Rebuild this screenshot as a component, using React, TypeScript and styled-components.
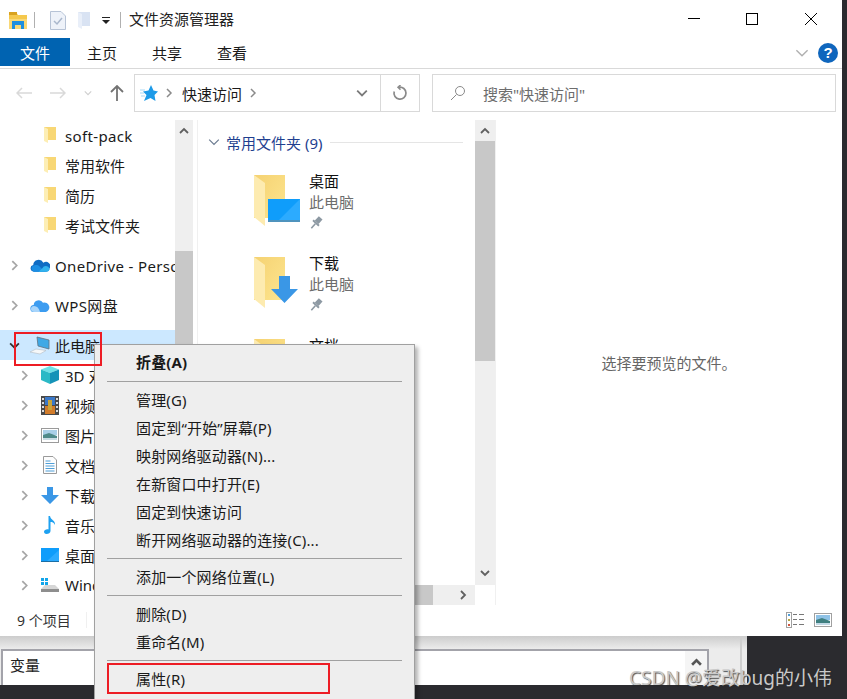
import styled, { createGlobalStyle } from 'styled-components';

const GlobalStyle = createGlobalStyle`
	html, body {
		margin: 0;
		padding: 0;
		background: #2b2b2f;
	}
	* {
		box-sizing: border-box;
	}
`;

const FONT = `"Noto Sans", "Noto Sans CJK SC", sans-serif`;

type Dir = 'up' | 'down' | 'left' | 'right';

const chevronPoints: Record<Dir, string> = {
	up: '1,7 5,3 9,7',
	down: '1,3 5,7 9,3',
	left: '7,1 3,5 7,9',
	right: '3,1 7,5 3,9',
};

function Chevron({ dir, color = '#a6a6a6', size = 10, width = 2 }: { dir: Dir; color?: string; size?: number; width?: number }) {
	return (
		<svg width={size} height={size} viewBox="0 0 10 10" fill="none">
			<polyline points={chevronPoints[dir]} stroke={color} strokeWidth={width} />
		</svg>
	);
}

function SmallFolder() {
	return (
		<svg width="14" height="18" viewBox="0 0 14 18">
			<rect x="1" y="1" width="12" height="13" fill="#f8d775" />
			<polygon points="1,1 5,3 5,17 1,15" fill="#fdeeb4" />
		</svg>
	);
}

function LargeFolder({ overlay }: { overlay: 'desktop' | 'download' | 'none' }) {
	return (
		<svg width="48" height="52" viewBox="0 0 48 52">
			<defs>
				<linearGradient id="fold" x1="0" y1="0" x2="1" y2="1">
					<stop offset="0" stopColor="#f5d272" />
					<stop offset="1" stopColor="#fde58f" />
				</linearGradient>
			</defs>
			<rect x="1" y="0" width="31" height="43" fill="url(#fold)" />
			<polygon points="1,0 12,8 12,51 1,42" fill="#fdebb0" />
			{overlay === 'desktop' && (
				<>
					<rect x="15" y="24" width="32" height="23" fill="#0f9dfb" />
					<polygon points="24,47 47,24 47,47" fill="#2cabff" />
					<rect x="15" y="45" width="32" height="2" fill="#4f93bd" />
				</>
			)}
			{overlay === 'download' && <polygon points="26,19 37,19 37,32 45,32 31.5,46 18,32 26,32" fill="#3a97e6" />}
		</svg>
	);
}

function Pin() {
	return (
		<svg width="14" height="14" viewBox="0 0 14 14">
			<g transform="rotate(42 7 7)" fill="#8d99a3">
				<rect x="4.5" y="0" width="5" height="6" />
				<rect x="3" y="6" width="8" height="2" />
				<rect x="6.2" y="8" width="1.6" height="6" />
			</g>
		</svg>
	);
}

const navIcons: Record<string, React.ReactNode> = {
	folder: <SmallFolder />,
	onedrive: (
		<svg width="21" height="15" viewBox="0 0 21 15">
			<path d="M4 14a3.6 3.6 0 0 1-.6-7.1A5.6 5.6 0 0 1 14 4.7 4.4 4.4 0 0 1 20.500 10.500 3.600 3.600 0 0 1 17 14z" fill="#0f6cc4" />
			<path d="M4 14a3.500 3.500 0 0 1 .5-6.800C7 6.500 9 7 10.500 9L15 13.200 16 14z" fill="#1c8ee3" />
			<path d="M9 14l4-3.500a4 4 0 0 1 7.500.500 3.400 3.400 0 0 1-3.500 3z" fill="#32b3ee" />
		</svg>
	),
	wps: (
		<svg width="20" height="15" viewBox="0 0 20 15">
			<path d="M4 14a3.500 3.500 0 0 1-.3-7A5 5 0 0 1 13 4.800 4.400 4.400 0 1 1 16 14z" fill="#3c9cf0" />
			<path d="M4 14a3 3 0 0 1 0-6c3 0 5 2 6 6z" fill="#a8d5fb" />
		</svg>
	),
	pc: (
		<svg width="20" height="20" viewBox="0 0 20 20">
			<polygon points="7,2 19,5 19,14 8,11" fill="#3fa9e6" stroke="#5f7282" strokeWidth="0.8" />
			<polygon points="0,17 6,14 16,15.500 10,19" fill="#f6f8f9" stroke="#b5bcc2" strokeWidth="0.6" />
		</svg>
	),
	cube: (
		<svg width="18" height="18" viewBox="0 0 18 18">
			<polygon points="9,0 18,3.500 9,7 0,3.500" fill="#6fe0e6" />
			<polygon points="0,3.500 9,7 9,18 0,14" fill="#2bb9c6" />
			<polygon points="18,3.500 9,7 9,18 18,14" fill="#1593b8" />
		</svg>
	),
	video: (
		<svg width="18" height="19" viewBox="0 0 18 19">
			<rect width="18" height="19" fill="#4a4a4a" />
			<rect x="4" y="1" width="10" height="8" fill="#3a78c8" />
			<rect x="4" y="10" width="10" height="8" fill="#d27c2a" />
			<rect x="7" y="4" width="4" height="10" fill="#c9a53a" />
			<path d="M1 2h2v2H1zM1 6h2v2H1zM1 10h2v2H1zM1 14h2v2H1zM15 2h2v2h-2zM15 6h2v2h-2zM15 10h2v2h-2zM15 14h2v2h-2z" fill="#ddd" />
		</svg>
	),
	picture: (
		<svg width="18" height="15" viewBox="0 0 18 15">
			<rect x="0.500" y="0.500" width="17" height="14" fill="#fff" stroke="#9a9a9a" />
			<rect x="2" y="2" width="14" height="5" fill="#a9cfe8" />
			<polygon points="2,7 8,5 16,8 16,12 2,12" fill="#4f8a8a" />
			<rect x="2" y="10" width="14" height="2" fill="#c9dbe4" />
		</svg>
	),
	doc: (
		<svg width="14" height="18" viewBox="0 0 14 18">
			<polygon points="0.500,0.500 10,0.500 13.500,4 13.500,17.500 0.500,17.500" fill="#fdfdfd" stroke="#9a9a9a" />
			<path d="M2.500 5h5M2.500 7.500h9M2.500 10h9M2.500 12.500h9M2.500 15h9" stroke="#4f9fd8" strokeWidth="1" />
		</svg>
	),
	download: (
		<svg width="18" height="17" viewBox="0 0 18 17">
			<polygon points="6,0 12,0 12,8 18,8 9,17 0,8 6,8" fill="#3a97e6" />
		</svg>
	),
	music: (
		<svg width="12" height="18" viewBox="0 0 12 18">
			<path d="M4.500 0H6c.5 4 5.500 4 5 9-1-2.500-3-3-4.500-3v9c0 2-2 3-4 3C.8 18 0 17 0 15.800 0 14 2.500 13 4.500 13.500z" fill="#1ea1f1" />
		</svg>
	),
	desktop: (
		<svg width="18" height="14" viewBox="0 0 18 14">
			<rect width="18" height="14" fill="#0f9dfb" />
			<polygon points="6,13 18,2 18,13" fill="#2cabff" />
			<rect y="13" width="18" height="1" fill="#1a6ea5" />
		</svg>
	),
	drive: (
		<svg width="20" height="16" viewBox="0 0 20 16">
			<path d="M1 1h3v3H1zM5 1h3v3H5zM1 5h3v3H1zM5 5h3v3H5z" fill="#12a5ea" />
			<polygon points="1,12 5,8 15,8 19,12" fill="#d6d6d6" />
			<rect x="1" y="12" width="18" height="3" fill="#8e8e8e" />
		</svg>
	),
};

const navRows = [
	{ label: 'soft-pack', icon: 'folder', indent: 18, gap: 0, wide: true },
	{ label: '常用软件', icon: 'folder', indent: 18, gap: 0 },
	{ label: '简历', icon: 'folder', indent: 18, gap: 0 },
	{ label: '考试文件夹', icon: 'folder', indent: 18, gap: 0 },
	{ label: 'OneDrive - Personal', icon: 'onedrive', indent: 8, gap: 10, arrow: 'right', wide: true },
	{ label: 'WPS网盘', icon: 'wps', indent: 8, gap: 10, arrow: 'right', wide: true },
	{ label: '此电脑', icon: 'pc', indent: 8, gap: 10, arrow: 'down', selected: true },
	{ label: '3D 对象', icon: 'cube', indent: 18, gap: 0, arrow: 'right' },
	{ label: '视频', icon: 'video', indent: 18, gap: 0, arrow: 'right' },
	{ label: '图片', icon: 'picture', indent: 18, gap: 0, arrow: 'right' },
	{ label: '文档', icon: 'doc', indent: 18, gap: 0, arrow: 'right' },
	{ label: '下载', icon: 'download', indent: 18, gap: 0, arrow: 'right' },
	{ label: '音乐', icon: 'music', indent: 18, gap: 0, arrow: 'right' },
	{ label: '桌面', icon: 'desktop', indent: 18, gap: 0, arrow: 'right' },
	{ label: 'Windows (C:)', icon: 'drive', indent: 18, gap: 0, arrow: 'right' },
];

const folders = [
	{ name: '桌面', overlay: 'desktop' as const },
	{ name: '下载', overlay: 'download' as const },
	{ name: '文档', overlay: 'none' as const },
];

const menuGroups = [
	[{ label: '折叠(A)', bold: true }],
	[
		{ label: '管理(G)' },
		{ label: '固定到“开始”屏幕(P)' },
		{ label: '映射网络驱动器(N)...' },
		{ label: '在新窗口中打开(E)' },
		{ label: '固定到快速访问' },
		{ label: '断开网络驱动器的连接(C)...' },
	],
	[{ label: '添加一个网络位置(L)' }],
	[{ label: '删除(D)' }, { label: '重命名(M)' }],
	[{ label: '属性(R)' }],
];

export default function App() {
	return (
		<Page>
			<GlobalStyle />
			<ExplorerWindow>
				<TitleBar>
					<QuickAccess>
						<svg width="18" height="17" viewBox="0 0 18 17">
							<path d="M0 0h7l2 3h9v14H0z" fill="#f5c84c" />
							<rect y="0" width="8" height="3" fill="#d9a21f" />
							<rect x="0" y="7" width="18" height="10" fill="#f9d877" />
							<path d="M3 9h12v8h-3v-4H6v4H3z" fill="#1e8fe0" />
						</svg>
						<TitleDivider />
						<svg width="16" height="19" viewBox="0 0 16 19">
							<polygon points="0.500,0.500 11,0.500 15.500,5 15.500,18.500 0.500,18.500" fill="#eef2f9" stroke="#b7c3d6" />
							<polyline points="4,10 7,13 12,7" fill="none" stroke="#a9b7cc" strokeWidth="1.500" />
						</svg>
						<GhostFolder>
							<svg width="13" height="19" viewBox="0 0 13 19">
								<rect x="1" y="1" width="12" height="14" fill="#d9e3f3" />
								<polygon points="1,1 5,3 5,18 1,16" fill="#e9eff9" />
							</svg>
						</GhostFolder>
						<DropGlyph />
						<TitleDivider />
					</QuickAccess>
					<WindowTitle>文件资源管理器</WindowTitle>
					<WindowButtons>
						<svg width="12" height="12" viewBox="0 0 12 12">
							<rect x="0" y="5" width="12" height="1" fill="#000" />
						</svg>
						<svg width="12" height="12" viewBox="0 0 12 12">
							<rect x="0.500" y="0.500" width="11" height="11" fill="none" stroke="#000" />
						</svg>
						<svg width="12" height="12" viewBox="0 0 12 12">
							<path d="M0 0l12 12M12 0L0 12" stroke="#000" strokeWidth="1" />
						</svg>
					</WindowButtons>
				</TitleBar>

				<RibbonTabs>
					<FileTab>文件</FileTab>
					<RibbonTab>主页</RibbonTab>
					<RibbonTab>共享</RibbonTab>
					<RibbonTab>查看</RibbonTab>
					<RibbonHelp>
						<Chevron dir="down" size={14} width={1} color="#b0b0b0" />
						<HelpBadge>?</HelpBadge>
					</RibbonHelp>
				</RibbonTabs>

				<AddressRow>
					<NavButtons>
						<svg width="16" height="12" viewBox="0 0 16 12">
							<path d="M16 6H1M6 1L1 6l5 5" fill="none" stroke="#d9d9d9" strokeWidth="1.500" />
						</svg>
						<svg width="16" height="12" viewBox="0 0 16 12">
							<path d="M0 6h15M10 1l5 5-5 5" fill="none" stroke="#d9d9d9" strokeWidth="1.500" />
						</svg>
						<Chevron dir="down" size={8} width={1.5} color="#d0d0d0" />
						<svg width="14" height="16" viewBox="0 0 14 16">
							<path d="M7 16V1M1 7l6-6 6 6" fill="none" stroke="#737373" strokeWidth="1.800" />
						</svg>
					</NavButtons>
					<AddressBox>
						<svg width="18" height="17" viewBox="0 0 18 17">
							<polygon points="11,0 13.500,5.500 18,6.500 14.500,10 15.500,16 10.500,13 4,16 6.500,10 3,6.500 8.500,5.500" fill="#1e9be8" />
							<path d="M0 5h5M0 8h4M1 11h4" stroke="#a9d8f5" strokeWidth="1" />
						</svg>
						<CrumbArrow>
							<Chevron dir="right" size={10} width={1.5} color="#8a8a8a" />
						</CrumbArrow>
						<CrumbText>快速访问</CrumbText>
						<CrumbArrow>
							<Chevron dir="right" size={10} width={1.5} color="#8a8a8a" />
						</CrumbArrow>
						<AddressEnd>
							<Chevron dir="down" size={12} width={1.5} color="#7a7a7a" />
						</AddressEnd>
						<RefreshCell>
							<svg width="16" height="16" viewBox="0 0 16 16">
								<path d="M7 2.200A6 6 0 1 1 2.200 6.500" fill="none" stroke="#8a8a8a" strokeWidth="1.700" />
								<path d="M8.500 0L6 2.300 8.500 4.600" fill="none" stroke="#8a8a8a" strokeWidth="1.500" />
							</svg>
						</RefreshCell>
					</AddressBox>
					<SearchBox>
						<svg width="16" height="16" viewBox="0 0 16 16">
							<circle cx="10" cy="6" r="4.500" fill="none" stroke="#8a8a8a" />
							<path d="M6.500 9.500L1 15" stroke="#8a8a8a" />
						</svg>
						<SearchText>搜索"快速访问"</SearchText>
					</SearchBox>
				</AddressRow>

				<Body>
					<NavPane>
						<NavTree>
							{navRows.map((row) => (
								<NavRow key={row.label} $indent={row.indent} $gap={row.gap} $selected={!!row.selected}>
									<NavArrow>
										{row.arrow === 'right' && <Chevron dir="right" size={11} width={1.6} />}
										{row.arrow === 'down' && <Chevron dir="down" size={11} width={1.6} color="#333" />}
									</NavArrow>
									<NavIcon>{navIcons[row.icon]}</NavIcon>
									<NavLabel $wide={!!row.wide}>{row.label}</NavLabel>
								</NavRow>
							))}
						</NavTree>
						<VScroll $width={18} $thumbTop={131} $thumbHeight={340}>
							<ScrollArrow $size={21}>
								<Chevron dir="up" size={10} width={1.8} color="#606060" />
							</ScrollArrow>
						</VScroll>
						<NavGutter />
					</NavPane>

					<MainPane>
						<MainTop>
							<FileList>
								<SectionHeader>
									<Chevron dir="down" size={12} width={1} color="#6a7a90" />
									<SectionTitle>常用文件夹 (9)</SectionTitle>
									<SectionRule />
								</SectionHeader>
								{folders.map((folder) => (
									<FolderItem key={folder.name}>
										<LargeFolder overlay={folder.overlay} />
										<FolderText>
											<FolderName>{folder.name}</FolderName>
											<FolderSub>此电脑</FolderSub>
											<Pin />
										</FolderText>
									</FolderItem>
								))}
							</FileList>
							<VScroll $width={20} $thumbTop={21} $thumbHeight={220}>
								<ScrollArrow $size={21}>
									<Chevron dir="up" size={10} width={1.8} color="#606060" />
								</ScrollArrow>
								<ScrollArrowEnd>
									<Chevron dir="down" size={10} width={1.8} color="#606060" />
								</ScrollArrowEnd>
							</VScroll>
						</MainTop>
						<HScroll>
							<HThumb />
							<HTrack>
								<Chevron dir="right" size={10} width={1.8} color="#606060" />
							</HTrack>
						</HScroll>
					</MainPane>

					<PreviewPane>选择要预览的文件。</PreviewPane>
				</Body>

				<StatusBar>
					<StatusText>9 个项目</StatusText>
					<StatusDivider />
					<ViewIcons>
						<svg width="18" height="16" viewBox="0 0 18 16">
							<rect x="0.500" y="0.500" width="5" height="15" fill="#fff" stroke="#a0a0a0" />
							<rect x="2" y="2" width="2" height="2" fill="#4f9fd8" />
							<rect x="2" y="7" width="2" height="2" fill="#b5a642" />
							<rect x="2" y="12" width="2" height="2" fill="#d0563c" />
							<path d="M7 2.500h4M13 2.500h5M7 7.500h4M13 7.500h5M7 12.500h4M13 12.500h5" stroke="#777" />
						</svg>
						<svg width="18" height="14" viewBox="0 0 18 14">
							<rect x="0.500" y="0.500" width="17" height="13" fill="#fff" stroke="#a0a0a0" />
							<rect x="2" y="2" width="14" height="5" fill="#8fc2e6" />
							<polygon points="2,7 8,5 16,8 16,12 2,12" fill="#3f7f80" />
							<rect x="2" y="10" width="14" height="2" fill="#c2d9e6" />
						</svg>
					</ViewIcons>
				</StatusBar>
			</ExplorerWindow>

			<BackWindow>
				<BackFrame>
					<VariableList>
						<VariableHeader>变量</VariableHeader>
						<BackScroll>
							<Chevron dir="up" size={11} width={2.4} color="#555" />
						</BackScroll>
					</VariableList>
				</BackFrame>
			</BackWindow>

			<ContextMenu>
				{menuGroups.map((group, index) => (
					<MenuGroup key={index} $first={index === 0}>
						{group.map((item) => (
							<MenuItem key={item.label} $bold={'bold' in item}>
								{item.label}
							</MenuItem>
						))}
					</MenuGroup>
				))}
				<RedBoxProperties />
			</ContextMenu>

			<RedBoxComputer />
			<Watermark>CSDN @爱改bug的小伟</Watermark>
		</Page>
	);
}

const Page = styled.div`
	position: relative;
	width: 847px;
	height: 699px;
	overflow: hidden;
	background: #2b2b2f;
	font-family: ${FONT};
	font-size: 15px;
	color: #1a1a1a;
`;

const ExplorerWindow = styled.div`
	width: 842px;
	height: 636px;
	background: #fff;
	display: flex;
	flex-direction: column;
	position: relative;
	z-index: 1;
`;

const TitleBar = styled.div`
	height: 38px;
	display: flex;
	align-items: center;
	padding: 2px 0 0 9px;
`;

const QuickAccess = styled.div`
	display: flex;
	align-items: center;
`;

const TitleDivider = styled.span`
	width: 1px;
	height: 16px;
	background: #b0b0b0;
	margin: 0 15px 0 7px;
	&:last-child {
		margin: 0 8px 0 10px;
	}
`;

const GhostFolder = styled.span`
	display: flex;
	margin-left: 11px;
`;

const DropGlyph = styled.span`
	margin-left: 12px;
	width: 8px;
	height: 7px;
	border-top: 1px solid #222;
	position: relative;
	&::after {
		content: '';
		position: absolute;
		left: 0;
		top: 2px;
		border-left: 4px solid transparent;
		border-right: 4px solid transparent;
		border-top: 4px solid #222;
	}
`;

const WindowTitle = styled.span`
	font-size: 15px;
	color: #222;
	line-height: 20px;
	padding-bottom: 2px;
`;

const WindowButtons = styled.div`
	margin-left: auto;
	display: flex;
	gap: 46px;
	align-items: center;
	padding-right: 25px;
	margin-top: -2px;
	svg:last-child {
		margin-left: 1px;
	}
`;

const RibbonTabs = styled.div`
	height: 31px;
	display: flex;
	align-items: flex-start;
	padding-right: 4px;
	border-bottom: 1px solid #d9d9d9;
`;

const FileTab = styled.div`
	width: 70px;
	height: 28px;
	background: #0063b1;
	color: #fff;
	display: flex;
	align-items: center;
	justify-content: center;
`;

const RibbonTab = styled.div`
	width: 65px;
	height: 28px;
	padding-right: 1px;
	display: flex;
	align-items: center;
	justify-content: center;
`;

const RibbonHelp = styled.div`
	margin-left: auto;
	height: 30px;
	display: flex;
	align-items: center;
	gap: 9px;
`;

const HelpBadge = styled.span`
	width: 20px;
	height: 20px;
	border-radius: 50%;
	background: #0f66bd;
	color: #fff;
	font-family: 'Liberation Sans', sans-serif;
	font-weight: 700;
	font-size: 15px;
	line-height: 20px;
	text-align: center;
`;

const AddressRow = styled.div`
	height: 51px;
	display: flex;
	align-items: flex-start;
	padding: 5px 6px 0 0;
`;

const NavButtons = styled.div`
	width: 134px;
	height: 38px;
	padding: 0 10px 0 16px;
	display: flex;
	align-items: center;
	justify-content: space-between;
`;

const AddressBox = styled.div`
	width: 286px;
	height: 38px;
	border: 1px solid #d9d9d9;
	display: flex;
	align-items: center;
	padding-left: 5px;
`;

const CrumbArrow = styled.span`
	display: flex;
	margin: 0 8px 0 6px;
`;

const CrumbText = styled.span`
	font-size: 15px;
`;

const AddressEnd = styled.span`
	margin-left: auto;
	display: flex;
	padding-right: 12px;
`;

const RefreshCell = styled.span`
	width: 39px;
	height: 100%;
	border-left: 1px solid #d9d9d9;
	display: flex;
	align-items: center;
	justify-content: center;
`;

const SearchBox = styled.div`
	margin-left: 12px;
	width: 404px;
	height: 38px;
	border: 1px solid #d9d9d9;
	display: flex;
	align-items: center;
	padding-left: 17px;
	gap: 17px;
`;

const SearchText = styled.span`
	color: #6d6d6d;
	font-size: 15px;
`;

const Body = styled.div`
	height: 485px;
	display: flex;
`;

const NavPane = styled.div`
	width: 198px;
	display: flex;
`;

const NavTree = styled.div`
	width: 175px;
	overflow: hidden;
`;

const NavRow = styled.div<{ $indent: number; $gap: number; $selected: boolean }>`
	height: 30px;
	margin-top: ${({ $gap }) => $gap}px;
	padding-left: ${({ $indent }) => $indent}px;
	display: flex;
	align-items: center;
	background: ${({ $selected }) => ($selected ? '#cce8ff' : 'transparent')};
`;

const NavArrow = styled.span`
	width: 12px;
	display: flex;
	justify-content: center;
	flex: none;
`;

const NavIcon = styled.span`
	width: 20px;
	margin-left: 10px;
	display: flex;
	justify-content: center;
	flex: none;
`;

const NavLabel = styled.span<{ $wide: boolean }>`
	margin-left: 5px;
	white-space: nowrap;
	font-size: 15px;
	letter-spacing: ${({ $wide }) => ($wide ? '0.35px' : '0')};
	padding-top: ${({ $wide }) => ($wide ? '1px' : '0')};
`;

const VScroll = styled.div<{ $width: number; $thumbTop: number; $thumbHeight: number }>`
	position: relative;
	width: ${({ $width }) => $width}px;
	flex: none;
	background: linear-gradient(
		#efefef ${({ $thumbTop }) => $thumbTop}px,
		#c8c8c8 ${({ $thumbTop }) => $thumbTop}px,
		#c8c8c8 ${({ $thumbTop, $thumbHeight }) => $thumbTop + $thumbHeight}px,
		#efefef ${({ $thumbTop, $thumbHeight }) => $thumbTop + $thumbHeight}px
	);
`;

const ScrollArrow = styled.div<{ $size: number }>`
	height: ${({ $size }) => $size}px;
	display: flex;
	align-items: center;
	justify-content: center;
`;

const ScrollArrowEnd = styled.div`
	position: absolute;
	left: 0;
	right: 0;
	bottom: 0;
	height: 24px;
	display: flex;
	align-items: center;
	justify-content: center;
`;

const NavGutter = styled.div`
	width: 5px;
	border-right: 1px solid #f0f0f0;
`;

const MainPane = styled.div`
	width: 298px;
	display: flex;
	flex-direction: column;
	border-right: 1px solid #f0f0f0;
`;

const MainTop = styled.div`
	flex: 1;
	min-height: 0;
	display: flex;
`;

const FileList = styled.div`
	flex: 1;
	overflow: hidden;
`;

const SectionHeader = styled.div`
	height: 40px;
	padding: 4px 0 0 10px;
	display: flex;
	align-items: center;
`;

const SectionTitle = styled.span`
	margin-left: 6px;
	color: #1f3f8f;
	font-size: 15px;
	white-space: nowrap;
`;

const SectionRule = styled.span`
	width: 133px;
	height: 1px;
	margin-left: 8px;
	background: #e5e5e5;
`;

const FolderItem = styled.div`
	height: 82px;
	padding-left: 55px;
	display: flex;
	align-items: center;
`;

const FolderText = styled.div`
	margin-left: 8px;
	margin-top: -2px;
	display: flex;
	flex-direction: column;
	align-items: flex-start;
	line-height: 21px;
`;

const FolderName = styled.span`
	color: #111;
`;

const FolderSub = styled.span`
	color: #6d6d6d;
	margin-bottom: 3px;
`;

const HScroll = styled.div`
	height: 20px;
	display: flex;
	margin-right: 20px;
`;

const HThumb = styled.div`
	width: 235px;
	background: #c8c8c8;
`;

const HTrack = styled.div`
	flex: 1;
	background: #efefef;
	display: flex;
	align-items: center;
	justify-content: flex-end;
	padding-right: 7px;
`;

const PreviewPane = styled.div`
	flex: 1;
	display: flex;
	align-items: center;
	justify-content: center;
	color: #666;
	font-size: 15px;
`;

const StatusBar = styled.div`
	flex: 1;
	display: flex;
	align-items: center;
	padding: 0 10px 2px 17px;
`;

const StatusText = styled.span`
	font-size: 14px;
	color: #333;
`;

const StatusDivider = styled.span`
	width: 1px;
	height: 16px;
	margin-left: 15px;
	background: #f0f0f0;
`;

const ViewIcons = styled.div`
	margin-left: auto;
	display: flex;
	align-items: center;
	gap: 10px;
`;

const BackWindow = styled.div`
	width: 747px;
	height: 49px;
	background: linear-gradient(#cccccc, #ececec 13px);
	padding-right: 5px;
`;

const BackFrame = styled.div`
	height: 100%;
	border-right: 2px solid #cfcfcf;
	padding: 13px 31px 0 1px;
`;

const VariableList = styled.div`
	height: 100%;
	background: #fff;
	border: 2px solid #a3a3aa;
	border-bottom: none;
	display: flex;
`;

const VariableHeader = styled.div`
	flex: 1;
	padding: 3px 0 0 7px;
	font-size: 15px;
	color: #222;
	line-height: 22px;
`;

const BackScroll = styled.div`
	width: 22px;
	background: #f5f5f5;
	display: flex;
	justify-content: center;
	padding-top: 6px;
`;

const ContextMenu = styled.div`
	position: absolute;
	z-index: 2;
	left: 94px;
	top: 344px;
	width: 321px;
	height: 360px;
	background: #eeeeee;
	border: 1px solid #a0a0a0;
	box-shadow: 3px 3px 4px rgba(0, 0, 0, 0.3);
	padding: 4px 12px 0;
`;

const MenuGroup = styled.div<{ $first: boolean }>`
	border-top: ${({ $first }) => ($first ? 'none' : '1px solid #a0a0a0')};
	padding: ${({ $first }) => ($first ? '0 0 4px' : '5px 0 3px')};
`;

const MenuItem = styled.div<{ $bold: boolean }>`
	height: 28px;
	line-height: 26px;
	padding-left: 29px;
	font-size: 15px;
	letter-spacing: 0.15px;
	font-weight: ${({ $bold }) => ($bold ? 700 : 400)};
	color: #1a1a1a;
	white-space: nowrap;
`;

const RedBoxProperties = styled.div`
	position: absolute;
	left: 12px;
	top: 318px;
	width: 223px;
	height: 31px;
	border: 2px solid #ed1c24;
`;

const RedBoxComputer = styled.div`
	position: absolute;
	z-index: 3;
	left: 14px;
	top: 332px;
	width: 88px;
	height: 34px;
	border: 2px solid #ed1c24;
`;

const Watermark = styled.div`
	position: absolute;
	z-index: 3;
	right: 15px;
	bottom: 7px;
	font-size: 19px;
	line-height: 28px;
	color: #c9c9c9;
	text-shadow: 1px 1px 1px rgba(40, 40, 40, 0.8);
	white-space: nowrap;
`;
